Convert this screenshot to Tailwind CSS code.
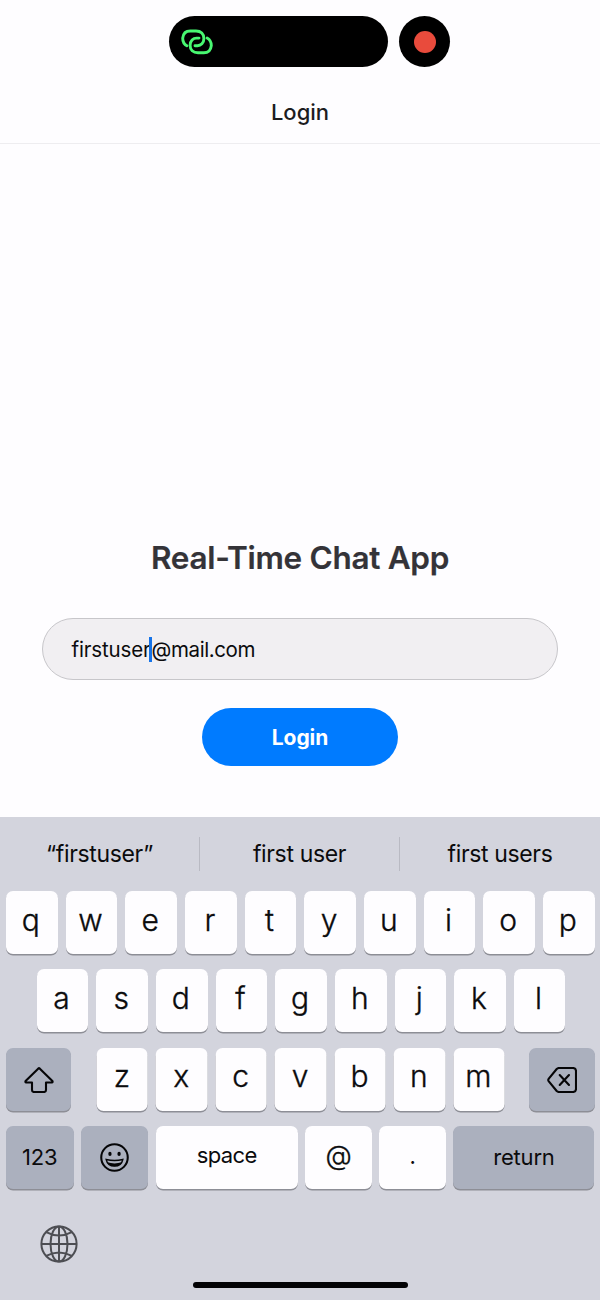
<!DOCTYPE html>
<html lang="en">
<head>
<meta charset="utf-8">
<title>Login</title>
<script src="https://cdn.jsdelivr.net/npm/@tailwindcss/browser@4"></script>
</head>
<body class="w-[600px] h-[1300px] overflow-hidden bg-[#fefdff] font-['Inter',sans-serif] text-[#0b0b0d] flex flex-col">
  <div class="h-[82px] shrink-0 pt-4 pl-[169px] flex gap-[11px]">
    <div class="w-[219px] h-[51px] rounded-full bg-black flex items-center pl-3">
      <svg class="w-8 h-[26px]" viewBox="0 0 32 26" fill="none" stroke="#48f871" stroke-width="2.9" stroke-linecap="round">
        <path d="M5.9 16.8C3.2 15.3 1.7 12.6 1.7 9.2C2.2 4.5 5 2 9.2 2H15C20 2 22.9 5 22.9 9.5C22.9 14 19.8 16.7 16.5 16.7H14"/>
        <path d="M5.9 16.8C3.2 15.3 1.7 12.6 1.7 9.2C2.2 4.5 5 2 9.2 2H15C20 2 22.9 5 22.9 9.5C22.9 14 19.8 16.7 16.5 16.7H14" transform="rotate(180 16 12.9)"/>
      </svg>
    </div>
    <div class="size-[51px] rounded-full bg-black flex items-center justify-center"><div class="size-[22px] rounded-full bg-[#e94b3c]"></div></div>
  </div>
  <header class="h-[62px] shrink-0 border-b border-[#eeedf0] flex items-center justify-center pb-0.5">
    <h1 class="text-[22px] leading-none font-medium text-[#1c1c1f]"><span>Login</span></h1>
  </header>
  <main class="h-[673px] shrink-0 pt-[394px] flex flex-col items-center">
    <h2 class="h-10 text-[31.5px] leading-10 font-semibold text-[#343338] whitespace-nowrap tracking-[-0.3px] [-webkit-text-stroke:0.2px_#343338]">Real-Time Chat App</h2>
    <div class="mt-10 w-[516px] h-[62px] shrink-0 rounded-full border border-[#c7c6ca] bg-[#f1eff2] flex items-center pl-[28.5px] text-[20.5px] tracking-[-0.15px]">
      <span class="pt-0.5">firstuser</span><span class="w-[3px] h-[25px] -ml-[2px] bg-[#1673e8]"></span><span class="pt-0.5 tracking-[-0.4px]">@mail.com</span>
    </div>
    <button class="mt-7 w-[196px] h-[58px] shrink-0 rounded-full bg-[#007bff] text-white text-[21px] font-bold pt-0.5 tracking-[-0.1px]">Login</button>
  </main>
  <section class="h-[483px] shrink-0 bg-[#d3d4dd] flex flex-col">
    <div class="h-[74px] shrink-0 flex items-center text-[23px] tracking-[-0.35px]">
      <div class="w-[199px] h-[34px] border-r border-[#b9bac3] box-content flex items-center justify-center"><span>“firstuser”</span></div>
      <div class="w-[199px] h-[34px] border-r border-[#b9bac3] box-content flex items-center justify-center"><span>first user</span></div>
      <div class="w-[200px] flex items-center justify-center"><span>first users</span></div>
    </div>
    <div class="flex flex-col gap-[15.4px] text-[30px] font-light leading-[58px] text-center [&_div>div]:h-[63px] [&_div>div]:rounded-[7px] [&_div>div]:shadow-[0_1.5px_0_#8d8e96]">
      <div class="flex justify-between pl-[6px] pr-[5.5px] [&>div]:w-[51.6px] [&>div]:bg-[#fefdff] [&>div]:pr-0.5 [-webkit-text-stroke:0.35px_#0b0b0d]">
        <div>q</div><div>w</div><div>e</div><div>r</div><div>t</div><div>y</div><div>u</div><div>i</div><div>o</div><div>p</div>
      </div>
      <div class="flex justify-between pl-[36.8px] pr-[34.5px] [&>div]:w-[51.6px] [&>div]:bg-[#fefdff] [&>div]:pr-0.5 [-webkit-text-stroke:0.35px_#0b0b0d]">
        <div>a</div><div>s</div><div>d</div><div>f</div><div>g</div><div>h</div><div>j</div><div>k</div><div>l</div>
      </div>
      <div class="flex justify-between px-[5.5px]">
        <div class="w-[65.5px] bg-[#abb0be] flex items-center justify-center pt-0.5 pl-px">
          <svg class="w-[30px] h-[26px]" viewBox="0 0 30 26" fill="none" stroke="#050507" stroke-width="2.1" stroke-linejoin="round"><path d="M14.4 1.4Q15 .9 15.6 1.4L28.4 14Q29 15.3 27.8 15.5H22V23Q22 25 20 25H10Q8 25 8 23V15.5H2.2Q1 15.3 1.6 14Z"/></svg>
        </div>
        <section class="w-[408px] translate-x-[0.6px] leading-[57px] flex justify-between [-webkit-text-stroke:0.35px_#0b0b0d] [&>div]:w-[51.4px] [&>div]:h-[63px] [&>div]:rounded-[7px] [&>div]:bg-[#fefdff] [&>div]:pr-px [&>div]:shadow-[0_1.5px_0_#8d8e96]">
          <div>z</div><div>x</div><div>c</div><div>v</div><div>b</div><div>n</div><div>m</div>
        </section>
        <div class="w-[65.5px] bg-[#abb0be] flex items-center justify-center pt-0.5">
          <svg class="w-[30px] h-[26px]" viewBox="0 0 30 26" fill="none" stroke="#050507" stroke-width="2.1" stroke-linejoin="round" stroke-linecap="round"><path d="M12 1H26Q29 1 29 4V22Q29 25 26 25H12Q10.7 25 9.7 24L1.8 14.4Q.7 13 1.8 11.6L9.7 2Q10.7 1 12 1Z"/><path d="M12.7 8 22 18M22 8 12.7 18"/></svg>
        </div>
      </div>
      <div class="flex justify-between pl-[6px] pr-[5.5px] text-[22px] leading-[62px] font-normal tracking-[-0.2px]">
        <div class="w-[67.5px] bg-[#abb0be]">123</div>
        <div class="w-[67px] bg-[#abb0be] flex items-center justify-center">
          <svg class="size-[29px]" viewBox="0 0 28 28" fill="none" stroke="#050507" stroke-width="2"><circle cx="14" cy="14" r="12.8"/><ellipse cx="9.6" cy="10.5" rx="1.6" ry="2" fill="#050507" stroke="none"/><ellipse cx="18.4" cy="10.5" rx="1.6" ry="2" fill="#050507" stroke="none"/><path d="M6 16Q14 17.8 22 16Q20.7 22.3 14 22.3T6 16Z" stroke-width="1.4"/><path d="M7 18.6Q14 20.8 21 18.6Q19.2 22.5 14 22.5T7 18.6Z" fill="#050507" stroke="none"/></svg>
        </div>
        <div class="w-[142px] bg-[#fefdff] leading-[59px] tracking-[-0.6px]">space</div>
        <div class="w-[66.5px] bg-[#fefdff] text-[27px] leading-[59px] font-light [-webkit-text-stroke:0.35px_#0b0b0d]">@</div>
        <div class="w-[66.5px] bg-[#fefdff] leading-[60px]">.</div>
        <div class="w-[141px] bg-[#abb0be]">return</div>
      </div>
    </div>
    <div class="pt-9 pl-10">
      <svg class="size-[38px]" viewBox="0 0 38 38" fill="none" stroke="#4d4e53" stroke-width="2"><circle cx="19" cy="19" r="17.6"/><ellipse cx="19" cy="19" rx="8.5" ry="17.6"/><path d="M19 1.4V36.6M1.4 19H36.6M6.2 7.2Q19 14 31.8 7.2M6.2 30.8Q19 24 31.8 30.8"/></svg>
    </div>
    <div class="mt-[19px] mx-auto w-[215px] h-[6px] shrink-0 rounded-full bg-[#030305]"></div>
  </section>
</body>
</html>
